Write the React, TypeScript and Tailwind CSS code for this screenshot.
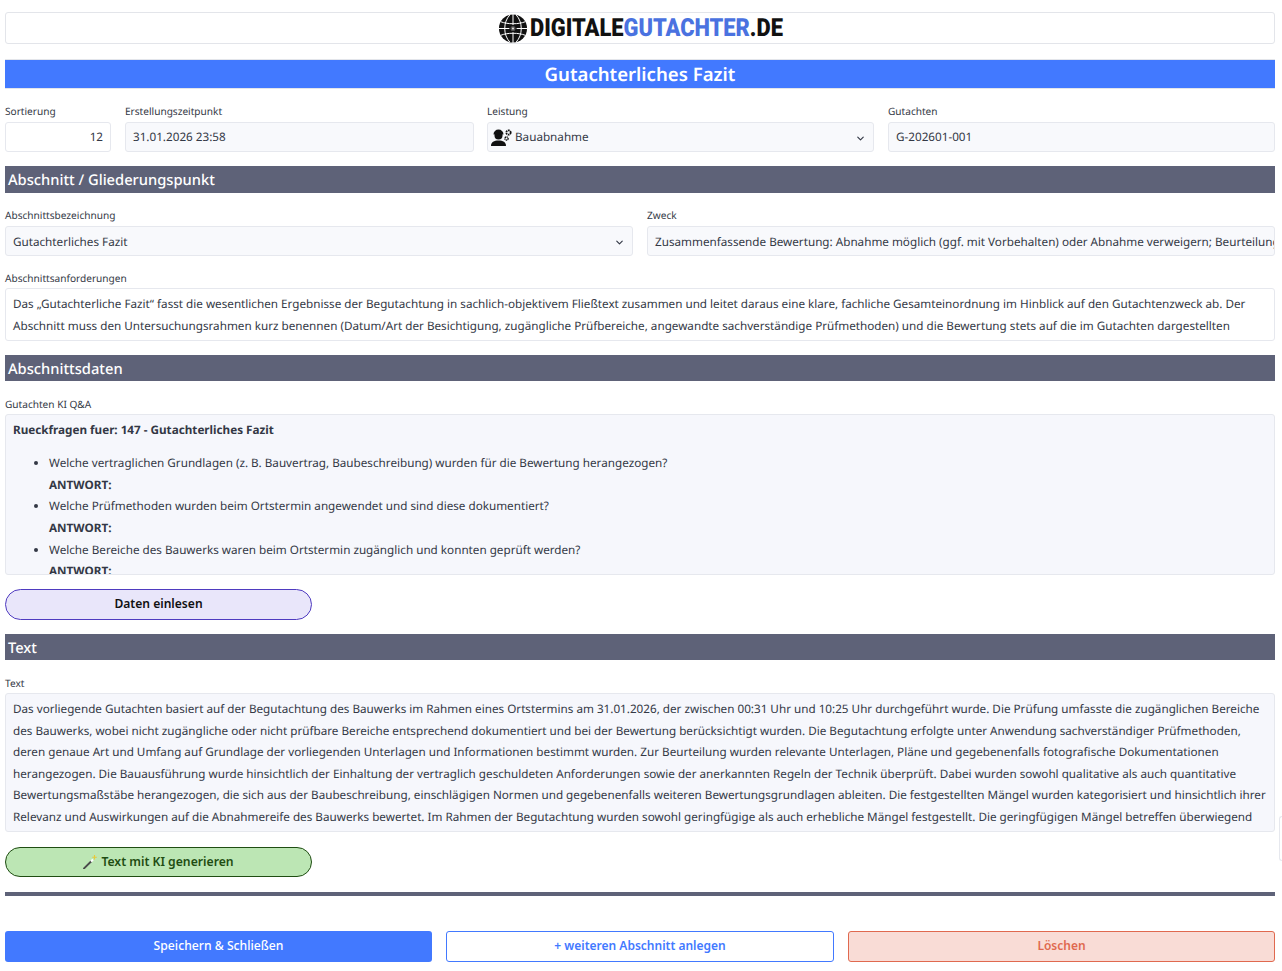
import { ChevronDown } from "lucide-react";
import { ReactNode } from "react";

const SectionBar = ({ title, className }: { title: string; className: string }) => (
  <div className={`flex items-center bg-[#5e6278] px-[3px] text-[14.7px] font-medium text-white ${className}`}>
    {title}
  </div>
);

const Label = ({ children, tall }: { children: ReactNode; tall?: boolean }) => (
  <label className={`block text-[10.1px] leading-[12px] text-[#333845] ${tall ? "h-[17px]" : "h-[16px]"}`}>{children}</label>
);

const fieldClass =
  "flex h-[30px] items-center rounded-[3px] border border-[#e6e8ee] px-[7px] pt-[2px] text-[11.7px] text-[#333845]";

const Globe = () => (
  <svg viewBox="0 0 32 32" className="h-[29px] w-[30px] shrink-0">
    <circle cx="16" cy="16" r="15.5" fill="#111" />
    <g fill="none" stroke="#fff" strokeWidth="1.1">
      <path d="M0 16h32M16 0v32" />
      <path d="M2.5 8.5c7 3 20 3 27 0M2.5 23.5c7-3 20-3 27 0" />
      <path d="M12.5 1C5 9 5 23 12.5 31M19.5 1C27 9 27 23 19.5 31" />
    </g>
    <circle cx="16" cy="16" r="3.4" fill="#555" stroke="#111" strokeWidth="1.2" />
    <circle cx="16" cy="16" r="1.2" fill="#ddd" />
  </svg>
);

const WorkerIcon = () => (
  <svg viewBox="0 0 22 18" className="h-[18px] w-[22px] shrink-0" fill="#111">
    <circle cx="7.5" cy="6.5" r="4" />
    <path d="M2.5 5.5a5 5 0 0 1 10 0z" />
    <path d="M0 17c0-4 3-5.5 7.5-5.5S15 13 15 17z" />
    <circle cx="17.5" cy="3.5" r="2.2" fill="none" stroke="#111" strokeWidth="1.8" strokeDasharray="1.6 .6" />
    <circle cx="15.5" cy="9.5" r="1.6" fill="none" stroke="#111" strokeWidth="1.4" strokeDasharray="1.2 .5" />
  </svg>
);

const Wand = () => (
  <svg viewBox="0 0 14 14" className="h-[14px] w-[14px]">
    <path d="M1 13.5 8 6.5" stroke="#4a4a4a" strokeWidth="1.8" strokeLinecap="round" />
    <path d="M8 6.5 10 4.5" stroke="#ffffff" strokeWidth="2" />
    <path d="M11.5 0v4.5M9.3 2.2h4.5" stroke="#e8c93a" strokeWidth="1.1" />
  </svg>
);

export default function App() {
  return (
    <div className="relative h-[971px] overflow-hidden bg-white pt-[12px] pr-[7px] pl-[5px] font-['Noto_Sans',sans-serif] text-[#333845] antialiased [text-rendering:geometricPrecision]">
      <div className="flex h-[32px] items-center justify-center rounded-[3px] border border-[#e3e5ea]">
        <Globe />
        <span className="ml-[2px] inline-block w-[252px] origin-left scale-x-[0.875] font-['Roboto',sans-serif] text-[25px] leading-none font-black whitespace-nowrap text-[#111]">
          DIGITALE<span className="text-[#4a72e0]">GUTACHTER</span>.DE
        </span>
      </div>

      <div className="mt-[15px] flex h-[30px] items-center justify-center border-y border-[#e3e5ea] bg-[#4279ff] pt-[2px] text-[18.6px] font-semibold text-white">
        Gutachterliches Fazit
      </div>

      <div className="mt-[16px] flex gap-[13.5px]">
        <div className="w-[106px] shrink-0">
          <Label tall>Sortierung</Label>
          <div className={`${fieldClass} justify-end bg-white`}>12</div>
        </div>
        <div className="ml-[0.5px] w-[348.5px] shrink-0">
          <Label tall>Erstellungszeitpunkt</Label>
          <div className={`${fieldClass} bg-[#f8f9fc]`}>31.01.2026 23:58</div>
        </div>
        <div className="w-[387px] shrink-0">
          <Label tall>Leistung</Label>
          <div className={`${fieldClass} justify-between bg-[#f8f9fc] pl-[3px]`}>
            <span className="flex items-center gap-[2px]">
              <WorkerIcon />
              Bauabnahme
            </span>
            <ChevronDown size={11} strokeWidth={2.5} />
          </div>
        </div>
        <div className="ml-[0.5px] min-w-0 flex-1">
          <Label tall>Gutachten</Label>
          <div className={`${fieldClass} bg-[#f8f9fc]`}>G-202601-001</div>
        </div>
      </div>

      <SectionBar title="Abschnitt / Gliederungspunkt" className="mt-[14px] h-[27px] pt-[1px]" />

      <div className="mt-[16px] flex gap-[14px]">
        <div className="w-[628px] shrink-0">
          <Label tall>Abschnittsbezeichnung</Label>
          <div className={`${fieldClass} justify-between bg-[#f8f9fc] pt-[3px]`}>
            Gutachterliches Fazit
            <ChevronDown size={11} strokeWidth={2.5} />
          </div>
        </div>
        <div className="min-w-0 flex-1">
          <Label tall>Zweck</Label>
          <div className={`${fieldClass} overflow-hidden bg-[#f8f9fc] pt-[3px] whitespace-nowrap`}>
            Zusammenfassende Bewertung: Abnahme möglich (ggf. mit Vorbehalten) oder Abnahme verweigern; Beurteilung der Abnahmereife
          </div>
        </div>
      </div>

      <div className="mt-[16px]">
        <Label>Abschnittsanforderungen</Label>
        <div className="h-[53px] overflow-hidden rounded-[3px] border border-[#e6e8ee] bg-white px-[7px] pt-[5px] text-[11.7px] leading-[21.6px]">
          Das „Gutachterliche Fazit“ fasst die wesentlichen Ergebnisse der Begutachtung in sachlich-objektivem Fließtext zusammen und leitet daraus eine klare, fachliche Gesamteinordnung im Hinblick auf den Gutachtenzweck ab. Der Abschnitt muss den Untersuchungsrahmen kurz benennen (Datum/Art der Besichtigung, zugängliche Prüfbereiche, angewandte sachverständige Prüfmethoden) und die Bewertung stets auf die im Gutachten dargestellten Feststellungen stützen.
        </div>
      </div>

      <SectionBar title="Abschnittsdaten" className="mt-[14px] h-[26px] pt-[3px]" />

      <div className="mt-[17px]">
        <Label>Gutachten KI Q&amp;A</Label>
        <div className="h-[161px] overflow-hidden rounded-[3px] border border-[#e6e8ee] bg-[#f6f7fc] px-[7px] pt-[5px] text-[11.7px] leading-[21.6px]">
          <p className="font-bold">Rueckfragen fuer: 147 - Gutachterliches Fazit</p>
          <ul className="mt-[11.6px] list-disc pl-[36px]">
            <li>
              Welche vertraglichen Grundlagen (z. B. Bauvertrag, Baubeschreibung) wurden für die Bewertung herangezogen?
              <br />
              <b>ANTWORT:</b>
            </li>
            <li>
              Welche Prüfmethoden wurden beim Ortstermin angewendet und sind diese dokumentiert?
              <br />
              <b>ANTWORT:</b>
            </li>
            <li>
              Welche Bereiche des Bauwerks waren beim Ortstermin zugänglich und konnten geprüft werden?
              <br />
              <b>ANTWORT:</b>
            </li>
          </ul>
        </div>
      </div>

      <button className="mt-[14px] block h-[31px] w-[307px] rounded-full border border-[#4f3bc0] bg-[#e9e6fa] text-[12.1px] font-semibold text-[#111]">
        Daten einlesen
      </button>

      <SectionBar title="Text" className="mt-[14px] h-[26px] pt-[3px]" />

      <div className="mt-[17px]">
        <Label>Text</Label>
        <div className="h-[139px] overflow-hidden rounded-[3px] border border-[#e6e8ee] bg-[#f6f7fc] px-[7px] pt-[5px] text-[11.7px] leading-[21.6px]">
          Das vorliegende Gutachten basiert auf der Begutachtung des Bauwerks im Rahmen eines Ortstermins am 31.01.2026, der zwischen 00:31 Uhr und 10:25 Uhr durchgeführt wurde. Die Prüfung umfasste die zugänglichen Bereiche des Bauwerks, wobei nicht zugängliche oder nicht prüfbare Bereiche entsprechend dokumentiert und bei der Bewertung berücksichtigt wurden. Die Begutachtung erfolgte unter Anwendung sachverständiger Prüfmethoden, deren genaue Art und Umfang auf Grundlage der vorliegenden Unterlagen und Informationen bestimmt wurden. Zur Beurteilung wurden relevante Unterlagen, Pläne und gegebenenfalls fotografische Dokumentationen herangezogen. Die Bauausführung wurde hinsichtlich der Einhaltung der vertraglich geschuldeten Anforderungen sowie der anerkannten Regeln der Technik überprüft. Dabei wurden sowohl qualitative als auch quantitative Bewertungsmaßstäbe herangezogen, die sich aus der Baubeschreibung, einschlägigen Normen und gegebenenfalls weiteren Bewertungsgrundlagen ableiten. Die festgestellten Mängel wurden kategorisiert und hinsichtlich ihrer Relevanz und Auswirkungen auf die Abnahmereife des Bauwerks bewertet. Im Rahmen der Begutachtung wurden sowohl geringfügige als auch erhebliche Mängel festgestellt. Die geringfügigen Mängel betreffen überwiegend
        </div>
      </div>

      <button className="mt-[15px] flex h-[30px] w-[307px] items-center justify-center gap-[4px] rounded-full border border-[#1f4d12] bg-[#bce6b4] text-[12.2px] font-semibold text-[#1f4d12]">
        <Wand />
        Text mit KI generieren
      </button>

      <div className="mt-[15px] h-[4px] bg-[#5e6278]" />

      <div className="mt-[35px] flex gap-[14px]">
        <button className="h-[31px] w-[427px] rounded-[3px] bg-[#4279ff] text-[12.2px] font-medium text-white">
          Speichern &amp; Schließen
        </button>
        <button className="h-[31px] w-[388px] rounded-[3px] border border-[#4279ff] bg-white pb-[2px] text-[12px] font-semibold text-[#4279ff]">
          + weiteren Abschnitt anlegen
        </button>
        <button className="h-[31px] flex-1 rounded-[3px] border border-[#e0694f] bg-[#f9dcd6] pb-[2px] text-[12px] font-semibold text-[#e0694f]">
          Löschen
        </button>
      </div>

      <div className="absolute top-[816px] right-0 h-[45px] w-[3px] rounded-l-[6px] border border-r-0 border-[#e6e8ee] bg-white" />
    </div>
  );
}
